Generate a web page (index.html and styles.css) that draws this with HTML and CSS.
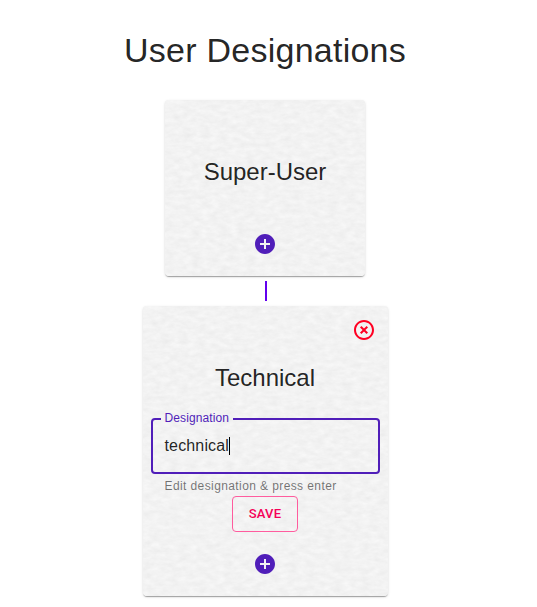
FILE: index.html
```
<!DOCTYPE html>
<html lang="en">
<head>
<meta charset="utf-8">
<title>User Designations</title>
<link rel="stylesheet" href="styles.css">
</head>
<body>
<main class="page">
  <h1 class="title">User Designations</h1>
  <section class="card card-root">
    <svg class="paper" aria-hidden="true">
      <filter id="grain" x="0" y="0" width="100%" height="100%" color-interpolation-filters="sRGB">
        <feTurbulence type="fractalNoise" baseFrequency="0.11 0.21" numOctaves="4" seed="8"/>
        <feColorMatrix values="0.055 0.02 0 0 0.912  0.055 0.02 0 0 0.912  0.055 0.02 0 0 0.912  0 0 0 0 1"/>
      </filter>
      <rect width="100%" height="100%" filter="url(#grain)"/>
    </svg>
    <h2 class="name">Super-User</h2>
    <svg class="icon add" viewBox="0 0 24 24"><path d="M12 2C6.48 2 2 6.48 2 12s4.48 10 10 10 10-4.48 10-10S17.52 2 12 2zm5 11h-4v4h-2v-4H7v-2h4V7h2v4h4v2z"/></svg>
  </section>
  <div class="connector"></div>
  <section class="card card-child">
    <svg class="paper" aria-hidden="true"><rect width="100%" height="100%" filter="url(#grain)"/></svg>
    <svg class="icon remove" viewBox="0 0 24 24"><path d="M14.59 8L12 10.59 9.41 8 8 9.41 10.59 12 8 14.59 9.41 16 12 13.41 14.59 16 16 14.59 13.41 12 16 9.41 14.59 8zM12 2C6.47 2 2 6.47 2 12s4.47 10 10 10 10-4.47 10-10S17.53 2 12 2zm0 18c-4.41 0-8-3.59-8-8s3.59-8 8-8 8 3.59 8 8-3.59 8-8 8z"/></svg>
    <h2 class="name">Technical</h2>
    <fieldset class="field">
      <legend class="label"><span>Designation</span></legend>
      <div class="value">technical<span class="caret"></span></div>
    </fieldset>
    <p class="helper">Edit designation &amp; press enter</p>
    <button class="save">SAVE</button>
    <svg class="icon add" viewBox="0 0 24 24"><path d="M12 2C6.48 2 2 6.48 2 12s4.48 10 10 10 10-4.48 10-10S17.52 2 12 2zm5 11h-4v4h-2v-4H7v-2h4V7h2v4h4v2z"/></svg>
  </section>
</main>
</body>
</html>
```
FILE: styles.css
```
* { box-sizing: border-box; }
body {
  margin: 0;
  background: #fff;
  color: rgba(0, 0, 0, 0.87);
  font-family: "Liberation Sans", Arial, sans-serif;
}
.page {
  width: 530px;
  height: 607px;
  padding-top: 29px;
  overflow: hidden;
  display: flex;
  flex-direction: column;
  align-items: center;
}
.title {
  margin: 0 0 29px;
  font-size: 34px;
  font-weight: 400;
  line-height: 42px;
  letter-spacing: 0.25px;
}
.card {
  position: relative;
  display: flex;
  flex-direction: column;
  align-items: center;
  flex-shrink: 0;
  border-radius: 4px;
  background: #f2f2f2;
  box-shadow: 0 2px 1px -1px rgba(0, 0, 0, 0.2), 0 1px 1px 0 rgba(0, 0, 0, 0.14), 0 1px 3px 0 rgba(0, 0, 0, 0.12);
}
.card > * { position: relative; }
.card > .paper {
  position: absolute;
  inset: 0;
  width: 100%;
  height: 100%;
  border-radius: 4px;
}
.card-root {
  width: 200px;
  height: 176px;
  padding-top: 56px;
}
.card-child {
  width: 245px;
  height: 290px;
  padding: 12px 8px 0;
}
.name {
  margin: 0;
  font-size: 24px;
  font-weight: 400;
  line-height: 32px;
}
.icon { width: 24px; height: 24px; flex-shrink: 0; }
.add { fill: #501eb9; }
.card-root .add { margin-top: 44px; }
.connector {
  width: 2px;
  height: 20px;
  margin: 5px 0 5px 2px;
  flex-shrink: 0;
  background: #6200ee;
}
.remove {
  align-self: flex-end;
  margin: 0 3.5px 20px 0;
  fill: #ff0022;
}
.field {
  width: 229px;
  height: 63px;
  min-width: 0;
  margin: 17px 0 0;
  padding: 0 12px;
  border: 2px solid #501eb9;
  border-radius: 4px;
}
.label {
  height: 16px;
  margin-left: -4px;
  padding: 0 4px;
  color: #501eb9;
  font-size: 12px;
  line-height: 14px;
  letter-spacing: 0.11px;
}
.value {
  display: flex;
  align-items: center;
  margin-top: 9px;
  font-size: 16px;
  line-height: 20px;
  letter-spacing: 0.15px;
}
.caret { width: 1px; height: 18px; background: #000; }
.helper {
  align-self: flex-start;
  margin: 5px 0 3px 14px;
  color: rgba(0, 0, 0, 0.54);
  font-size: 12px;
  line-height: 14px;
  letter-spacing: 0.4px;
}
.save {
  width: 66px;
  height: 36px;
  margin-bottom: 20px;
  padding: 0;
  border: 1px solid #ff5c9e;
  border-radius: 4px;
  background: transparent;
  color: #f50057;
  font: 500 13px/20px Roboto, "Liberation Sans", sans-serif;
  letter-spacing: 0.2px;
}
```
